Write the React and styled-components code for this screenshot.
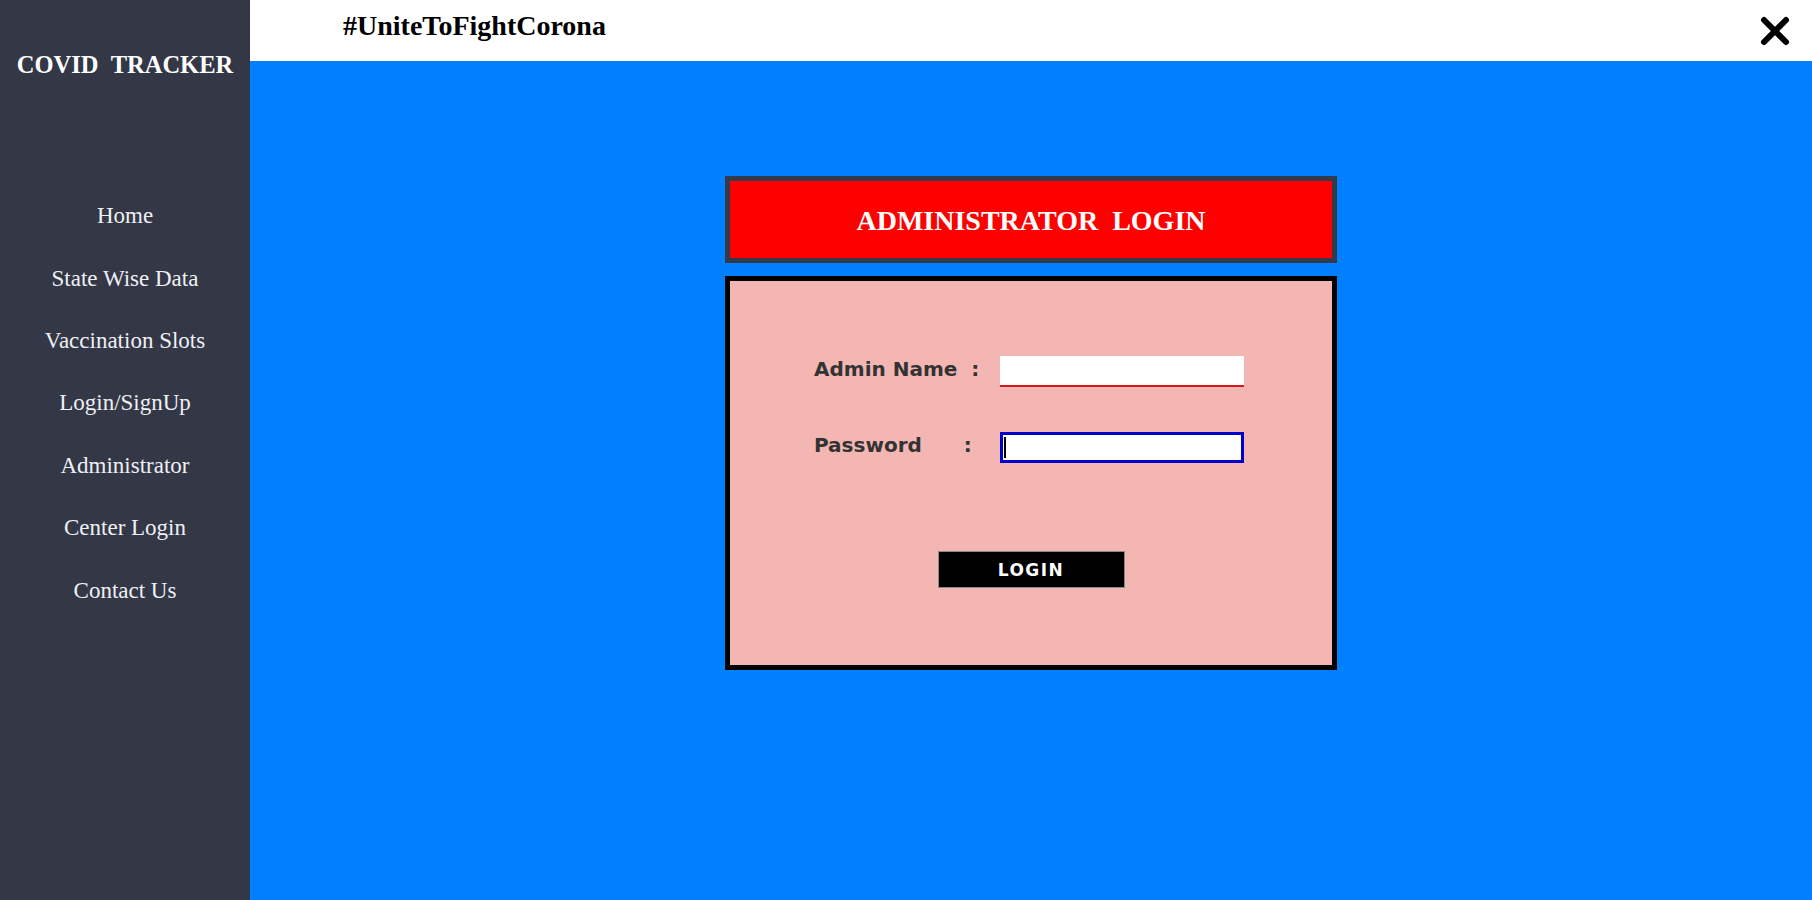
import React from 'react'
import styled, { createGlobalStyle } from 'styled-components'

const navItems = [
  'Home',
  'State Wise Data',
  'Vaccination Slots',
  'Login/SignUp',
  'Administrator',
  'Center Login',
  'Contact Us',
]

export default function App() {
  return (
    <Page>
      <GlobalStyle />
      <Sidebar>
        <Brand>COVID&nbsp;&nbsp;TRACKER</Brand>
        <NavList>
          {navItems.map((item) => (
            <NavItem key={item}>{item}</NavItem>
          ))}
        </NavList>
      </Sidebar>
      <Main>
        <TopBar>
          <Tagline>#UniteToFightCorona</Tagline>
          <CloseButton aria-label="close">
            <svg width="32" height="32" viewBox="0 0 32 32">
              <path
                d="M5 5 L27 27 M27 5 L5 27"
                stroke="#000"
                strokeWidth="6"
                strokeLinecap="round"
                fill="none"
              />
            </svg>
          </CloseButton>
        </TopBar>
        <Content>
          <Panel>
            <TitleBox>
              <Title>ADMINISTRATOR&nbsp;&nbsp;LOGIN</Title>
            </TitleBox>
            <FormBox>
              <Field>
                <Label>
                  Admin Name<Colon $gap={14}>:</Colon>
                </Label>
                <InputWrap>
                  <TextInput type="text" $variant="underline" />
                </InputWrap>
              </Field>
              <Field $top={45}>
                <Label>
                  Password<Colon $gap={42}>:</Colon>
                </Label>
                <InputWrap>
                  <TextInput type="password" $variant="focused" />
                  <Caret />
                </InputWrap>
              </Field>
              <LoginButton>LOGIN</LoginButton>
            </FormBox>
          </Panel>
        </Content>
      </Main>
    </Page>
  )
}

// styled components
const GlobalStyle = createGlobalStyle`
  * { box-sizing: border-box; }
  body { margin: 0; }
`

const Page = styled.div`
  display: flex;
  width: 100%;
  height: 100vh;
  overflow: hidden;
`

const Sidebar = styled.aside`
  width: 250px;
  flex-shrink: 0;
  background: #343746;
  display: flex;
  flex-direction: column;
  align-items: center;
  padding-top: 50px;
`

const Brand = styled.h1`
  margin: 0;
  font-family: 'Liberation Serif', 'Times New Roman', serif;
  font-weight: bold;
  font-size: 24.5px;
  line-height: 30px;
  color: #fff;
  white-space: nowrap;
`

const NavList = styled.nav`
  margin-top: 105px;
  display: flex;
  flex-direction: column;
  width: 100%;
`

const NavItem = styled.a`
  height: 62.4px;
  display: flex;
  align-items: center;
  justify-content: center;
  font-family: 'Liberation Serif', 'Times New Roman', serif;
  font-size: 23px;
  color: #eef0f5;
  cursor: pointer;
`

const Main = styled.main`
  flex: 1;
  display: flex;
  flex-direction: column;
  background: #0080ff;
`

const TopBar = styled.header`
  height: 61px;
  background: #fff;
  display: flex;
  justify-content: space-between;
  align-items: flex-start;
  padding: 10px 22px 0 93px;
`

const Tagline = styled.h2`
  margin: 0;
  font-family: 'Liberation Serif', 'Times New Roman', serif;
  font-weight: bold;
  font-size: 28px;
  line-height: 32px;
  color: #000;
`

const CloseButton = styled.button`
  background: transparent;
  border: none;
  padding: 0;
  margin-top: 5px;
  margin-right: -1px;
  width: 32px;
  height: 32px;
  cursor: pointer;
`

const Content = styled.section`
  flex: 1;
  display: flex;
  flex-direction: column;
  align-items: center;
`

const Panel = styled.div`
  width: 612px;
  margin-top: 115px;
`

const TitleBox = styled.div`
  height: 87px;
  border: 5px solid #323a4c;
  background: #ff0000;
  display: flex;
  align-items: center;
  justify-content: center;
  padding-top: 3px;
`

const Title = styled.h3`
  margin: 0;
  font-family: 'Liberation Serif', 'Times New Roman', serif;
  font-weight: bold;
  font-size: 28px;
  color: #fff;
`

const FormBox = styled.form`
  margin-top: 13px;
  border: 5px solid #000;
  background: #f4b6b2;
  display: flex;
  flex-direction: column;
  padding: 75px 0 77px;
`

const Field = styled.div`
  display: flex;
  align-items: center;
  height: 31px;
  padding-left: 84px;
  margin-top: ${(p) => p.$top || 0}px;
`

const Label = styled.label`
  width: 186px;
  display: flex;
  align-items: center;
  font-family: 'DejaVu Sans', Verdana, sans-serif;
  font-weight: bold;
  font-size: 20px;
  color: #333;
  margin-top: -5px;
`

const Colon = styled.span`
  margin-left: ${(p) => p.$gap}px;
`

const InputWrap = styled.div`
  position: relative;
  width: 244px;
  height: 31px;
`

const TextInput = styled.input`
  width: 100%;
  height: 100%;
  background: #fff;
  outline: none;
  font-size: 16px;
  border: ${(p) => (p.$variant === 'focused' ? '3px solid #0000cc' : 'none')};
  border-bottom: ${(p) => (p.$variant === 'focused' ? '3px' : '2px')} solid
    ${(p) => (p.$variant === 'focused' ? '#0000cc' : '#d81818')};
`

const Caret = styled.span`
  position: absolute;
  left: 4px;
  top: 5px;
  width: 2px;
  height: 21px;
  background: #000;
`

const LoginButton = styled.button`
  align-self: center;
  margin-top: 88px;
  width: 187px;
  height: 37px;
  background: #000;
  border: 1px solid #8a8a8a;
  color: #fff;
  font-family: 'DejaVu Sans', Verdana, sans-serif;
  font-weight: bold;
  font-size: 17px;
  letter-spacing: 1.5px;
  cursor: pointer;
`
